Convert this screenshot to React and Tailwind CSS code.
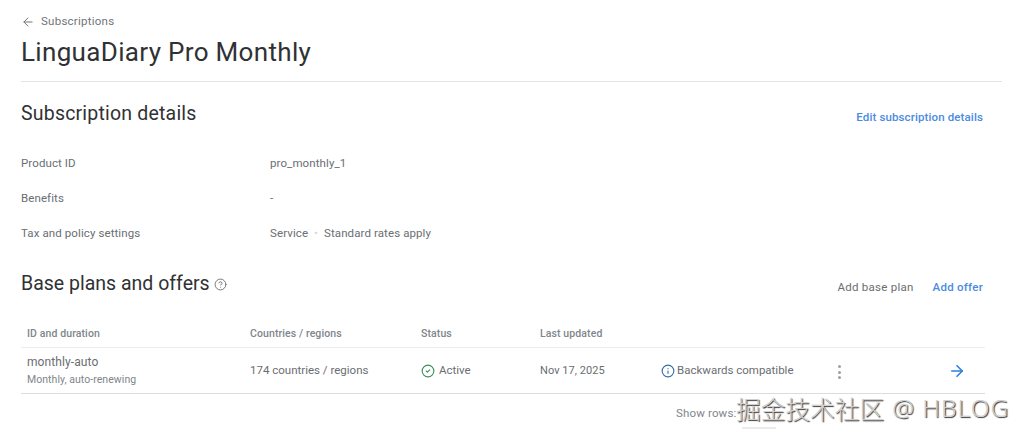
import { ArrowLeft, ArrowRight, CircleCheck, CircleHelp, Info } from "lucide-react";

const details = [
  { label: "Product ID", value: "pro_monthly_1" },
  { label: "Benefits", value: "-" },
  { label: "Tax and policy settings", value: <>Service <span className="mx-[3px] text-[#d5d7d6]">•</span> Standard rates apply</> },
];

const rowGrid = "grid grid-cols-[223px_171px_119px_121px_172px_115px_1fr] items-center px-[6px]";

export default function App() {
  return (
    <div className="relative h-[438px] w-[1024px] overflow-hidden bg-white font-['Roboto',sans-serif] text-[#6a6e72]">
      <div className="px-[21px] pt-[14px]">
        <div className="flex h-[15px] items-center gap-[6px] text-[11.5px] tracking-[0.25px] text-[#70757a]">
          <ArrowLeft size={14} strokeWidth={1.7} />
          <span>Subscriptions</span>
        </div>
        <h1 className="mt-[5px] h-[36px] text-[26px] leading-[36px] tracking-[0.33px] text-[#303134]">LinguaDiary Pro Monthly</h1>
        <div className="mt-[11px] h-px w-[981px] bg-[#e3e3e3]"></div>

        <div className="mt-[19px] flex h-[26px] w-[962px] items-center justify-between">
          <h2 className="text-[19.5px] tracking-[0.2px] text-[#303134]">Subscription details</h2>
          <a className="mt-[8px] text-[11.5px] font-medium tracking-[0.12px] text-[#4a8be2]">Edit subscription details</a>
        </div>

        <div className="mt-[19px] flex flex-col">
          {details.map((d) => (
            <div key={d.label} className="flex h-[35px] items-center pt-px text-[11.5px] tracking-[0.1px]">
              <span className="w-[249px]">{d.label}</span>
              <span>{d.value}</span>
            </div>
          ))}
        </div>

        <div className="mt-[20px] flex h-[26px] w-[962px] items-center justify-between">
          <div className="flex items-center gap-[4px]">
            <h2 className="text-[19.5px] tracking-[0px] text-[#303134]">Base plans and offers</h2>
            <CircleHelp size={13} strokeWidth={1.7} className="mt-[1px]" />
          </div>
          <div className="mt-[7px] flex items-center gap-[19px] text-[11.5px] tracking-[0.25px]">
            <span>Add base plan</span>
            <span className="font-medium text-[#4a8be2]">Add offer</span>
          </div>
        </div>

        <div className="mt-[23px] w-[964px]">
          <div className={`${rowGrid} h-[28px] border-b border-[#ececec] text-[10.5px] font-medium tracking-[0.1px] text-[#80868b]`}>
            <span>ID and duration</span>
            <span>Countries / regions</span>
            <span>Status</span>
            <span>Last updated</span>
          </div>
          <div className={`${rowGrid} h-[46px] border-b border-[#dcdcdc] pt-px text-[11.5px] tracking-[0px]`}>
            <div className="flex flex-col">
              <span className="text-[12px] leading-[17px] tracking-[0.1px]">monthly-auto</span>
              <span className="text-[10.5px] leading-[17px] tracking-[0.05px] text-[#80868b]">Monthly, auto-renewing</span>
            </div>
            <span>174 countries / regions</span>
            <span className="flex items-center gap-[4px]">
              <CircleCheck size={14} strokeWidth={1.9} className="text-[#3c8f5c]" />
              Active
            </span>
            <span className="text-[11px] tracking-[0.05px]">Nov 17, 2025</span>
            <span className="flex items-center gap-[2px]">
              <Info size={14} strokeWidth={1.9} className="text-[#2f6ea8]" />
              Backwards compatible
            </span>
            <div className="mt-[2px] flex flex-col gap-[2.5px] pl-[5px]">
              <span className="h-[3px] w-[3px] rounded-full bg-[#9aa0a6]"></span>
              <span className="h-[3px] w-[3px] rounded-full bg-[#9aa0a6]"></span>
              <span className="h-[3px] w-[3px] rounded-full bg-[#9aa0a6]"></span>
            </div>
            <ArrowRight size={18} strokeWidth={2.2} className="text-[#2f7fe0]" />
          </div>
          <div className="mt-[11px] pl-[655px] text-[11.5px] tracking-[0.15px] text-[#80868b]">Show rows:</div>
          <div className="ml-[721px] mt-[5px] h-[2px] w-[34px] bg-[#ebebeb]"></div>
        </div>
      </div>

      <div className="absolute left-[736px] top-[392px] flex items-center whitespace-nowrap text-[#cfcfcf] [text-shadow:1px_1px_1px_#333333,-1px_-1px_0_#ffffff]">
        <span className="font-['Noto_Sans_CJK_SC',sans-serif] text-[24.7px] leading-[32px] font-light">掘金技术社区</span>
        <span className="ml-[8px] font-['Noto_Sans',sans-serif] text-[24.5px] leading-[32px] font-light tracking-[1px]">@ HBLOG</span>
      </div>
    </div>
  );
}
